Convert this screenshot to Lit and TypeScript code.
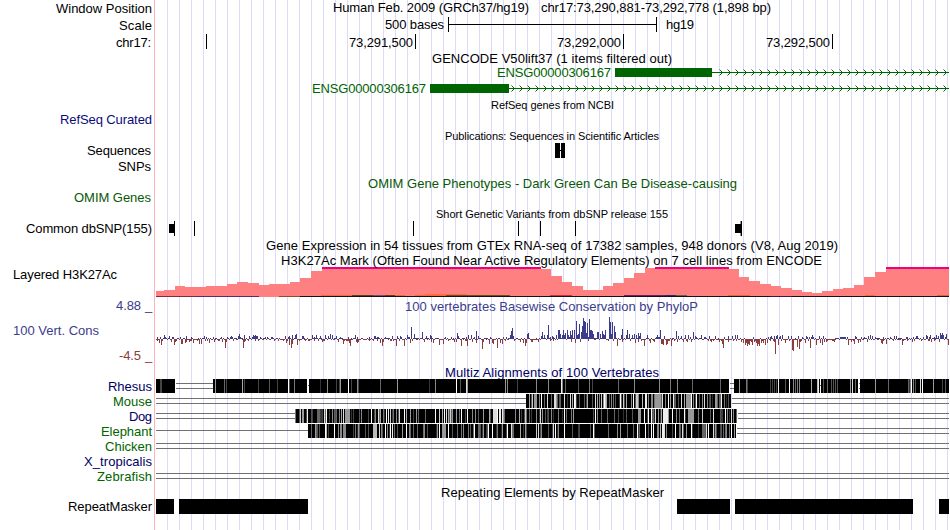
import { LitElement, html, svg, css } from 'lit';
import { customElement } from 'lit/decorators.js';

// Every track is drawn in browser pixels: the label area spans 0..156, the data area 156..949.
const DATA_LEFT = 156;
const DATA_RIGHT = 949;

const SNP_TICKS = [174, 194, 413, 518, 540, 575, 741];

// [end x, top y] of every step of the H3K27Ac signal, 267 is the clipped maximum
const H3K27AC = [
  [164, 291], [175, 290], [185, 286], [206, 287], [227, 286], [237, 284], [248, 282],
  [259, 283], [269, 285], [290, 284], [300, 282], [311, 278], [322, 271], [541, 267],
  [551, 269], [562, 276], [572, 282], [583, 286], [603, 290], [613, 286], [624, 283],
  [634, 278], [645, 273], [655, 268], [729, 267], [739, 269], [749, 277], [760, 281],
  [771, 284], [781, 286], [792, 288], [802, 290], [812, 292], [822, 293], [833, 291],
  [843, 289], [854, 288], [864, 285], [875, 277], [886, 272], [949, 267],
];

// other cell lines showing at the bottom of the signal: [x1, x2, y, colour]
const CELL_LINES: [number, number, number, string][] = [
  [156, 196, 296, '#84283c'], [196, 259, 296, '#5c2878'], [279, 300, 296, '#8c5028'],
  [300, 949, 296, '#14101c'],
  [321, 352, 295, '#ff6432'], [352, 373, 295, '#5c4020'], [373, 385, 295, '#784880'],
  [385, 395, 295, '#5c4020'], [395, 405, 295, '#f06432'], [415, 446, 295, '#ff6432'],
  [425, 467, 294, '#f87040'], [446, 510, 295, '#705018'], [550, 572, 295, '#dc2840'],
  [624, 665, 295, '#702060'], [665, 676, 295, '#302860'], [676, 687, 295, '#686048'],
  [728, 750, 295, '#f06432'], [770, 792, 296, '#381848'], [865, 875, 295, '#ff6432'],
  [937, 949, 295, '#e06432'],
];

// x:height
const CONS_UP = `164:4 165:2 169:3 172:2 204:3 206:2 213:2 231:3 232:2 239:5 244:4 249:3 253:4 254:3
255:4 256:3 257:3 260:2 271:2 285:3 289:3 292:4 295:4 296:5 303:3 312:4 316:4 320:3 325:4 328:3
330:5 332:4 336:3 355:4 357:2 375:3 392:3 397:3 407:4 411:12 414:5 422:7 426:3 430:4 457:6 458:3
468:4 471:4 476:8 478:3 506:2 510:4 511:8 512:11 513:3 527:5 528:6 542:7 544:4 547:4 548:14 552:3
556:4 558:9 559:9 560:5 562:4 563:9 564:4 565:6 567:9 568:4 570:8 571:4 572:9 574:9 576:18 577:4
578:5 579:15 581:7 582:13 583:21 584:18 585:17 586:6 587:16 589:20 590:9 591:9 592:8 593:5 597:7
598:7 600:5 602:8 603:5 604:4 605:9 609:22 610:17 611:5 612:17 614:13 615:7 621:4 622:10 626:4
627:9 629:5 632:4 634:5 636:4 638:6 640:6 647:4 657:4 660:9 676:8 681:3 685:4 688:4 693:7 695:3
701:4 715:3 732:3 735:4 737:4 771:3 776:3 777:4 780:3 782:4 788:3 791:3 798:3 812:4 819:3 823:3
840:2 841:2 842:2 843:2 844:2 855:3 868:3 870:4 872:3 875:2 896:3 926:4 930:4 936:4 938:3 940:6
941:4 942:6 943:4 946:5`;
const CONS_DOWN = `159:4 161:6 174:6 175:3 181:5 182:5 185:4 189:3 193:4 199:5 201:5 209:4 222:3 225:9
226:3 243:9 244:3 255:2 278:2 286:4 289:6 291:9 292:5 297:6 299:2 322:3 338:3 343:5 349:4 350:7
357:4 358:3 380:4 382:7 383:3 396:7 404:7 410:4 424:3 433:4 439:6 443:5 456:3 461:7 467:7 472:3
476:4 482:10 483:3 489:5 492:4 493:5 497:9 500:4 502:5 520:3 523:4 525:7 526:4 571:3 575:4 617:7
622:3 635:4 638:3 644:7 650:4 654:3 661:5 662:5 663:6 666:6 667:5 671:7 677:3 683:3 687:3 711:3
722:5 723:9 741:3 743:4 745:6 746:4 747:7 748:5 749:6 751:3 752:6 754:3 756:4 757:7 758:5 759:7
761:4 763:4 765:6 767:4 775:15 778:6 785:4 792:11 793:12 797:8 799:10 805:4 810:9 816:6 820:4
822:6 824:3 826:3 834:3 848:6 851:3 854:5 858:4 881:4 882:5 886:5 902:6 912:3 931:3 948:6`;

// marks are x:grey level as a hex digit, with an optional run length
interface Species {
  name: string;
  x: number;
  dark?: boolean;
  blocks: number[][];
  gaps: number[][];
  seed?: number;
  marks: string;
}

const SPECIES: Species[] = [
  {
    name: 'Rhesus', x: 109, dark: true,
    blocks: [[156, 175], [213, 307], [309, 729], [734, 820], [821, 858], [860, 949]],
    gaps: [[176, 213], [730, 734], [859, 860]],
    marks: `160:4:2 215:9 224:6 226:4 242:a 244:4 258:4 269:5 277:4 288:f 289:5 294:7 320:3 327:8
    336:4 339:4 340:9 348:f 351:4 357:8 358:4 380:6 397:9 429:3 435:8 456:f 460:5 466:d 467:9 505:9
    507:8 517:4 536:8 548:8 561:e 562:8 565:6 578:5 589:7 592:4 618:6 634:8 659:8 670:7 677:8 692:6
    720:6 739:9 746:7 747:4 770:4 772:4 774:4 776:4 778:e 785:5 789:f 793:8 795:6 797:7 799:8 811:a
    817:b 818:e 823:5 827:6 831:5 833:5 835:5 837:5 850:9 852:d 855:6 875:9 888:6 908:6 909:3 910:8
    911:f 913:8 915:5 920:d 922:f 933:9 942:4 945:5`,
  },
  {
    name: 'Mouse', x: 114, blocks: [[526, 731]], gaps: [[156, 526], [732, 949]], seed: 11,
    marks: `529:a 532:c 534:9:3 539:8 541:f 544:6 547:d 551:6 554:d:2 556:9 559:5 564:d 570:d 572:a
    574:f 575:e 587:a 592:5 595:d 597:a 599:8 601:c 603:9 604:f 605:c 606:a 609:5 611:8 613:7 620:f
    623:c 626:a 631:8 633:f 636:c:2 638:8 642:b 645:e:2 648:8 651:8 652:8 655:9:6 662:d 665:8 668:f
    670:9 673:e 681:d 684:a 686:9:5 691:f 693:8 696:f 702:8 704:d 707:8 710:5 715:9:2 717:6 721:e
    724:7 728:5`,
  },
  {
    name: 'Dog', x: 130, dark: true, blocks: [[296, 737]], gaps: [[156, 295], [738, 949]], seed: 5,
    marks: `295:7 299:5 300:c 302:9:2 306:4 307:e 312:4 317:6:3 321:3 324:d 326:f 332:8 336:6 339:8
    341:a 343:d 345:9:5 353:4 359:5 361:8 371:f 375:8 378:d 380:a 383:7 386:f 388:e 390:c 393:7
    396:8 399:d 404:f 406:a 410:9 416:9 425:6 435:f 439:c 442:a 444:f 446:d 448:a 450:c 452:9 456:9
    461:f 467:f 472:8 475:8 483:9 489:a 493:d:4 497:f 499:e:2 502:e 503:9 515:8 519:a 525:c 529:6
    536:8 540:d 542:9 551:8 558:7 564:f 573:9 595:f 597:8 607:6 614:6 618:4 626:5 632:5 638:9:3
    644:f 648:f 651:f 655:d 658:9 661:a 663:e:5 668:9 672:f 676:8 679:6 684:f 688:9:6 698:7 702:c
    710:5 713:d 720:5 725:f 727:8 731:d 733:8 736:6`,
  },
  {
    name: 'Elephant', x: 102, blocks: [[308, 736]], gaps: [[737, 949]], seed: 23,
    marks: `315:9 317:5 319:5 325:f 326:b 334:f 338:8 340:8:2 343:8:3 353:4 355:7 358:9 373:b:4
    379:d 381:8 385:f 387:8 390:f 392:e 397:5 402:9 406:f 409:8 417:6 424:8 437:9 439:f 442:9:4
    448:f 452:5 457:6 463:8 468:7 474:f 478:6:2 480:5 483:9 488:f 492:f 497:7 502:9 507:f 511:d
    513:6 520:a 525:9 536:c 538:d 541:8 548:5 553:d 555:f 558:8 564:f 572:5 579:4 590:5 593:f 608:6
    617:8 620:9 637:f 639:6 645:f 651:f 653:f 657:8:2 660:b 662:e:2 664:d 666:8 675:f 679:7 682:d
    686:9 691:f 702:6:3 706:d 708:f 713:d 715:9 723:6 726:8 731:f 734:9`,
  },
  { name: 'Chicken', x: 106, blocks: [], gaps: [[156, 949]], marks: '' },
  { name: 'X_tropicalis', x: 85, dark: true, blocks: [], gaps: [], marks: '' },
  { name: 'Zebrafish', x: 98, blocks: [], gaps: [[156, 949]], marks: '' },
];

const parse = (data: string) => data.split(/\s+/).filter(Boolean).map((item) => item.split(':'));

// small repeatable generator, keeps the fine texture the same on every render
const generator = (seed: number) => {
  let state = seed;
  return () => {
    state = (state * 16807) % 2147483647;
    return state / 2147483647;
  };
};

const rect = (x: number, y: number, w: number, h: number, fill = '#000') => svg`
  <rect x=${x} y=${y} width=${w} height=${h} fill=${fill}></rect>`;

const text = (value: string, x1: number, x2: number, y: number, cls = '') => svg`
  <text class=${cls} x=${x1 - 1} y=${y} textLength=${x2 - x1 + 1}>${value}</text>`;

@customElement('app-root')
export class AppRoot extends LitElement {
  static styles = css`
    :host {
      display: block;
      width: 950px;
      height: 530px;
      overflow: hidden;
      background: #fff;
    }
    .browser {
      display: flex;
      flex-direction: column;
      width: 949px;
      height: 530px;
      background:
        linear-gradient(#ffb4b4, #ffb4b4) 154px 0 / 1px 100% no-repeat,
        repeating-linear-gradient(to right, #dcdcf8 0 1px, transparent 1px 12px) 167px 0 / 782px 100% no-repeat;
    }
    .row {
      display: flex;
      flex: none;
    }
    svg {
      display: block;
      flex: none;
      overflow: visible;
      shape-rendering: crispEdges;
    }
    text {
      font-family: 'Liberation Sans', Arial, sans-serif;
      font-size: 13px;
      fill: #000;
      white-space: pre;
    }
    .small {
      font-size: 11px;
    }
    .navy {
      fill: #0c0c78;
    }
    .omim {
      fill: #085808;
    }
    .gene {
      fill: #006400;
    }
    .up {
      fill: #3c3c8c;
    }
    .down {
      fill: #8c3c3c;
    }
    .dark {
      fill: #000064;
    }
    .chevrons {
      fill: none;
      stroke: #006400;
      stroke-width: 1;
      shape-rendering: auto;
    }
  `;

  render() {
    return html`
      <main class="browser">
        ${this._row(0, 17, text('Window Position', 57, 152, 13), [
          text('Human Feb. 2009 (GRCh37/hg19)', 334, 529, 12),
          text('chr17:73,290,881-73,292,778 (1,898 bp)', 542, 771, 12),
        ])}
        ${this._row(17, 16, text('Scale', 120, 152, 30), this._scale())}
        ${this._row(33, 17, text('chr17:', 117, 151, 47), this._ruler())}
        ${this._row(50, 49, null, [
          text('GENCODE V50lift37 (1 items filtered out)', 433, 672, 63),
          this._gene(498, 615, 712, 72),
          this._gene(313, 430, 509, 88),
        ])}
        ${this._row(99, 14, null, text('RefSeq genes from NCBI', 492, 614, 109, 'small'))}
        ${this._row(113, 16, text('RefSeq Curated', 61, 152, 124, 'navy'), null)}
        ${this._row(129, 13, null, text('Publications: Sequences in Scientific Articles', 446, 659, 140, 'small'))}
        ${this._row(142, 18, text('Sequences', 88, 151, 155), [
          rect(555, 143, 5, 15), rect(561, 143, 4, 15), rect(560, 150, 1, 1),
        ])}
        ${this._row(160, 16, text('SNPs', 119, 151, 171), null)}
        ${this._row(176, 16, null, text('OMIM Gene Phenotypes - Dark Green Can Be Disease-causing', 369, 737, 188, 'omim'))}
        ${this._row(192, 16, text('OMIM Genes', 75, 151, 202, 'omim'), null)}
        ${this._row(208, 13, null, text('Short Genetic Variants from dbSNP release 155', 437, 668, 218, 'small'))}
        ${this._row(221, 17, text('Common dbSNP(155)', 27, 152, 233), [
          SNP_TICKS.map((x) => rect(x, 221, 1, 15)),
          rect(740, 221, 1, 15, '#999'),
          rect(169, 224, 5, 9),
          rect(735, 224, 6, 9),
        ])}
        ${this._row(238, 16, null, text(
          'Gene Expression in 54 tissues from GTEx RNA-seq of 17382 samples, 948 donors (V8, Aug 2019)',
          267, 838, 250,
        ))}
        ${this._row(254, 44, text('Layered H3K27Ac', 14, 117, 279), this._histogram())}
        ${this._row(298, 67, [
          text('4.88', 117, 141, 310, 'up'), text('_', 146, 152, 310, 'up'),
          text('100 Vert. Cons', 14, 99, 335, 'up'),
          text('-4.5', 120, 141, 360, 'down'), text('_', 146, 152, 360, 'down'),
        ], this._conservation())}
        ${this._row(365, 14, null, text('Multiz Alignments of 100 Vertebrates', 446, 659, 377, 'dark'))}
        ${SPECIES.map((species, i) => this._species(species, 379 + i * 15))}
        ${this._row(484, 15, null, text('Repeating Elements by RepeatMasker', 442, 664, 497))}
        ${this._row(499, 31, text('RepeatMasker', 69, 152, 511), [
          [156, 174], [179, 308], [677, 730], [735, 913], [939, 949],
        ].map(([x1, x2]) => rect(x1, 499, x2 - x1, 15)))}
      </main>`;
  }

  _row(top: number, height: number, label: unknown, track: unknown) {
    const width = DATA_RIGHT - DATA_LEFT;
    return html`
      <div class="row">
        <svg width=${DATA_LEFT} height=${height} viewBox="0 ${top} ${DATA_LEFT} ${height}">${label}</svg>
        <svg width=${width} height=${height} viewBox="${DATA_LEFT} ${top} ${width} ${height}">${track}</svg>
      </div>`;
  }

  _scale() {
    return [
      text('500 bases', 386, 444, 29),
      rect(448, 17, 1, 15),
      rect(448, 24, 209, 1),
      rect(656, 17, 1, 15),
      text('hg19', 667, 694, 29),
    ];
  }

  _ruler() {
    return [
      [206, 415, 623, 832].map((x) => rect(x, 34, 1, 15)),
      text('73,291,500', 350, 413, 47),
      text('73,292,000', 558, 621, 47),
      text('73,292,500', 767, 830, 47),
    ];
  }

  _gene(labelX: number, start: number, end: number, y: number) {
    let d = '';
    // strand arrows sit every 8 pixels
    for (let x = Math.ceil((end + 2) / 8) * 8 + 2; x < DATA_RIGHT; x += 8) {
      d += `M${x - 2.5} ${y - 2.5}l3 3l-3 3`;
    }
    return svg`
      ${text('ENSG00000306167', labelX, start - 4, y + 5, 'gene')}
      ${rect(start, y - 4, end - start, 9, '#006400')}
      ${rect(end, y, DATA_RIGHT - end, 1, '#006400')}
      <path class="chevrons" d=${d}></path>`;
  }

  _histogram() {
    let left = DATA_LEFT;
    const steps = H3K27AC.map(([right, top]) => {
      const x = left;
      left = right;
      return [
        rect(x, top, right - x, 297 - top, '#ff8080'),
        top === 267 ? rect(x, 267, right - x, 2, '#f00080') : null,
      ];
    });
    return [
      steps,
      CELL_LINES.map(([x1, x2, y, fill]) => rect(x1, y, x2 - x1, 1, fill)),
      text('H3K27Ac Mark (Often Found Near Active Regulatory Elements) on 7 cell lines from ENCODE', 282, 822, 265),
    ];
  }

  _conservation() {
    const up = new Map(parse(CONS_UP).map(([x, h]) => [Number(x), Number(h)]));
    const down = new Map(parse(CONS_DOWN).map(([x, h]) => [Number(x), Number(h)]));
    const random = generator(71);
    const bars = [];
    for (let x = DATA_LEFT; x < DATA_RIGHT; x += 1) {
      const sign = random();
      const size = 1 + Math.floor(random() * random() * 3);
      const above = up.get(x) || (!down.has(x) && sign > 0.5 ? size : 0);
      const below = down.get(x) || (!up.has(x) && sign <= 0.6 ? size : 0);
      if (above) {
        bars.push(rect(x, 339 - above, 1, above, '#3c3c8c'));
      }
      if (below) {
        bars.push(rect(x, 339, 1, below, '#8c3c3c'));
      }
    }
    return [text('100 vertebrates Basewise Conservation by PhyloP', 406, 698, 311, 'up'), bars];
  }

  _species(species: Species, y: number) {
    const { name, x, dark, blocks, gaps, seed, marks } = species;
    const stripes = [];
    if (seed) {
      const random = generator(seed * 977);
      for (let i = blocks[0][0] + 3; i < blocks[0][1] - 2; i += 1) {
        if (random() < 0.18) {
          const grey = 40 + Math.floor(random() * 80);
          stripes.push(rect(i, y, 1, 14, `rgb(${grey},${grey},${grey})`));
        }
      }
    }
    return this._row(y, 15, text(name, x, 152, y + 12, dark ? 'dark' : 'gene'), [
      gaps.map(([x1, x2]) => [rect(x1, y + 4, x2 - x1, 1, '#707070'), rect(x1, y + 9, x2 - x1, 1, '#707070')]),
      name === 'Elephant' ? rect(156, y + 6, 152, 1, '#707070') : null,
      name === 'Rhesus' ? [rect(308, y + 6, 1, 1, '#707070'), rect(820, y + 6, 1, 1, '#707070')] : null,
      blocks.map(([x1, x2]) => rect(x1, y, x2 - x1, 14)),
      stripes,
      parse(marks).map(([at, level, run]) => rect(Number(at), y, Number(run || 1), 14, `#${level.repeat(3)}`)),
    ]);
  }
}
